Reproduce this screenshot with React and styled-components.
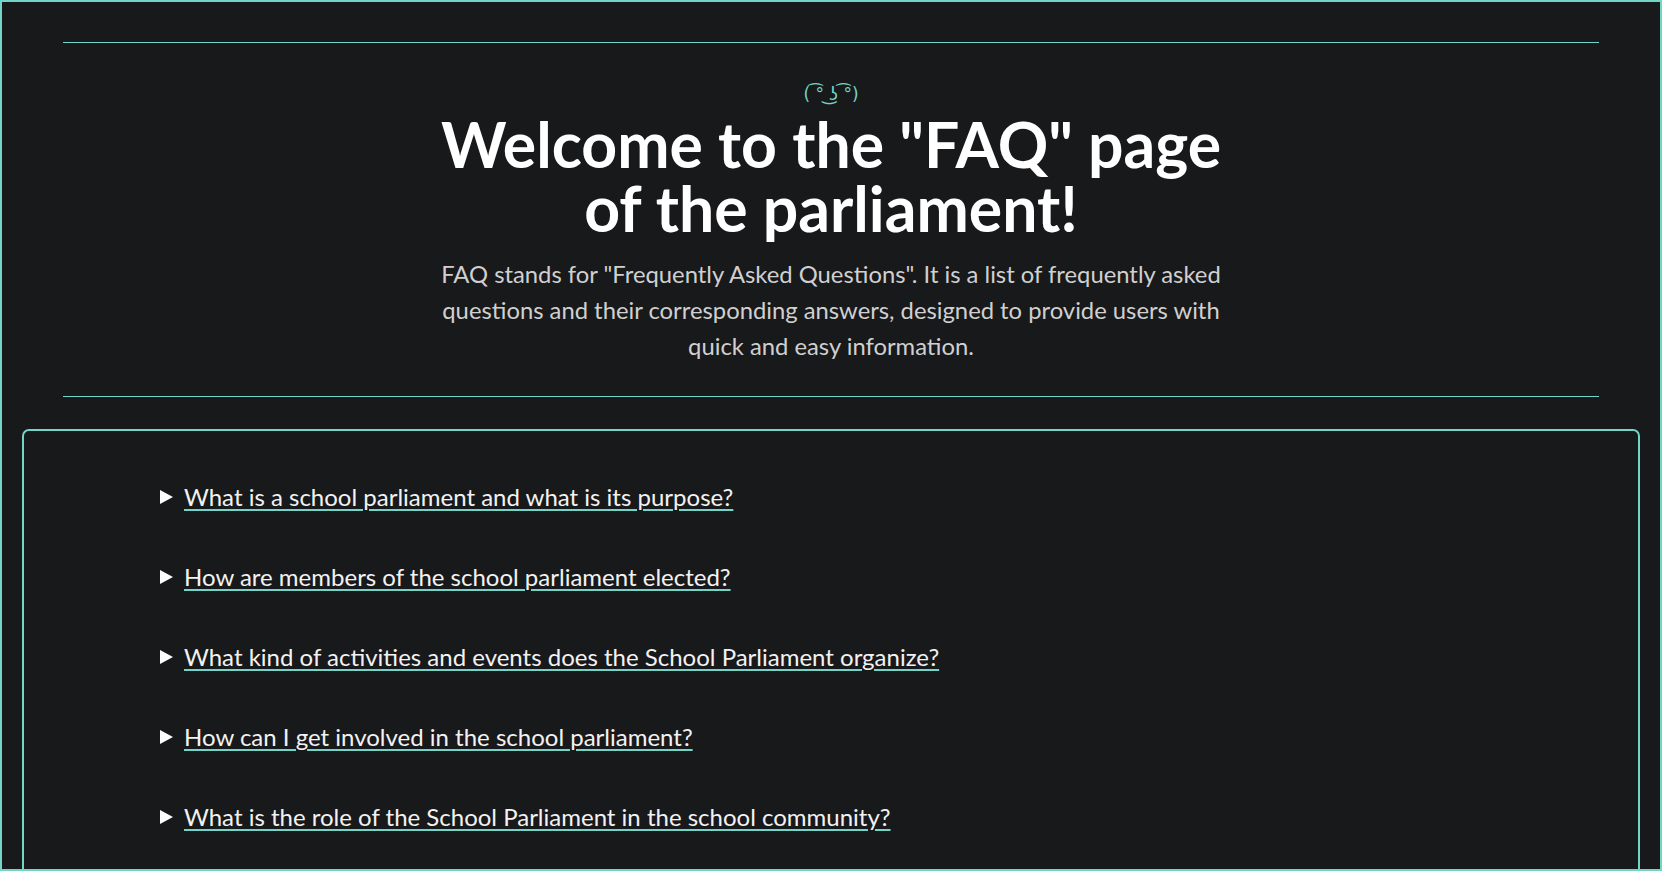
import React from "react";
import styled, { createGlobalStyle } from "styled-components";

const teal = "#72d5c8";

const Global = createGlobalStyle`
  html, body { margin: 0; padding: 0; background: #18191b; }
  * { box-sizing: border-box; }
`;

const Frame = styled.div`
  height: 100vh;
  border: 2px solid ${teal};
  background: #18191b;
  overflow: hidden;
  font-family: Lato, "Noto Sans", sans-serif;
  color: #fff;
`;

const Header = styled.header`
  max-width: 1536px;
  margin: 0 auto;
  padding-top: 40px;
  display: flex;
  flex-direction: column;
  align-items: center;
`;

const Rule = styled.hr`
  width: 100%;
  height: 1px;
  margin: 0;
  border: none;
  background: ${teal};
`;

const Face = styled.div`
  margin-top: 39px;
  font-family: "DejaVu Sans", sans-serif;
  font-size: 17px;
  line-height: 24px;
  color: ${teal};
`;

const Title = styled.h1`
  margin: 6px 0 0;
  max-width: 820px;
  font-size: 62.5px;
  line-height: 64px;
  font-weight: 700;
  text-align: center;
  color: #fff;
`;

const Lead = styled.p`
  margin: 16px 0 32px;
  max-width: 812px;
  font-size: 23.8px;
  line-height: 36px;
  text-align: center;
  color: #d0d0d0;
`;

const Card = styled.section`
  margin: 32px 20px 0;
  border: 2px solid ${teal};
  border-radius: 7px;
  padding: 48px 0 40px 136px;
  display: flex;
  flex-direction: column;
  gap: 44px;
`;

const Item = styled.details`
  font-size: 24px;
  line-height: 36px;
  color: #f2f2f2;
`;

const Question = styled.summary`
  cursor: pointer;
  display: flex;
  align-items: center;
  gap: 11px;
  list-style: none;
  &::-webkit-details-marker { display: none; }
  &::marker { content: ""; }
`;

const Arrow = styled.svg`
  width: 13px;
  height: 14px;
  flex: none;
`;

const QText = styled.span`
  text-decoration: underline;
  text-decoration-color: ${teal};
  text-decoration-thickness: 2px;
  text-underline-offset: 3px;
`;

const questions = [
  "What is a school parliament and what is its purpose?",
  "How are members of the school parliament elected?",
  "What kind of activities and events does the School Parliament organize?",
  "How can I get involved in the school parliament?",
  "What is the role of the School Parliament in the school community?",
];

export default function App() {
  return (
    <>
      <Global />
      <Frame>
        <Header>
          <Rule />
          <Face>( ͡° ͜ʖ ͡°)</Face>
          <Title>Welcome to the "FAQ" page of the parliament!</Title>
          <Lead>
            FAQ stands for "Frequently Asked Questions". It is a list of frequently asked
            questions and their corresponding answers, designed to provide users with
            quick and easy information.
          </Lead>
          <Rule />
        </Header>
        <Card>
          {questions.map((q) => (
            <Item key={q}>
              <Question>
                <Arrow viewBox="0 0 13 14">
                  <path d="M0 0 L13 7 L0 14 Z" fill="#fff" />
                </Arrow>
                <QText>{q}</QText>
              </Question>
            </Item>
          ))}
        </Card>
      </Frame>
    </>
  );
}
